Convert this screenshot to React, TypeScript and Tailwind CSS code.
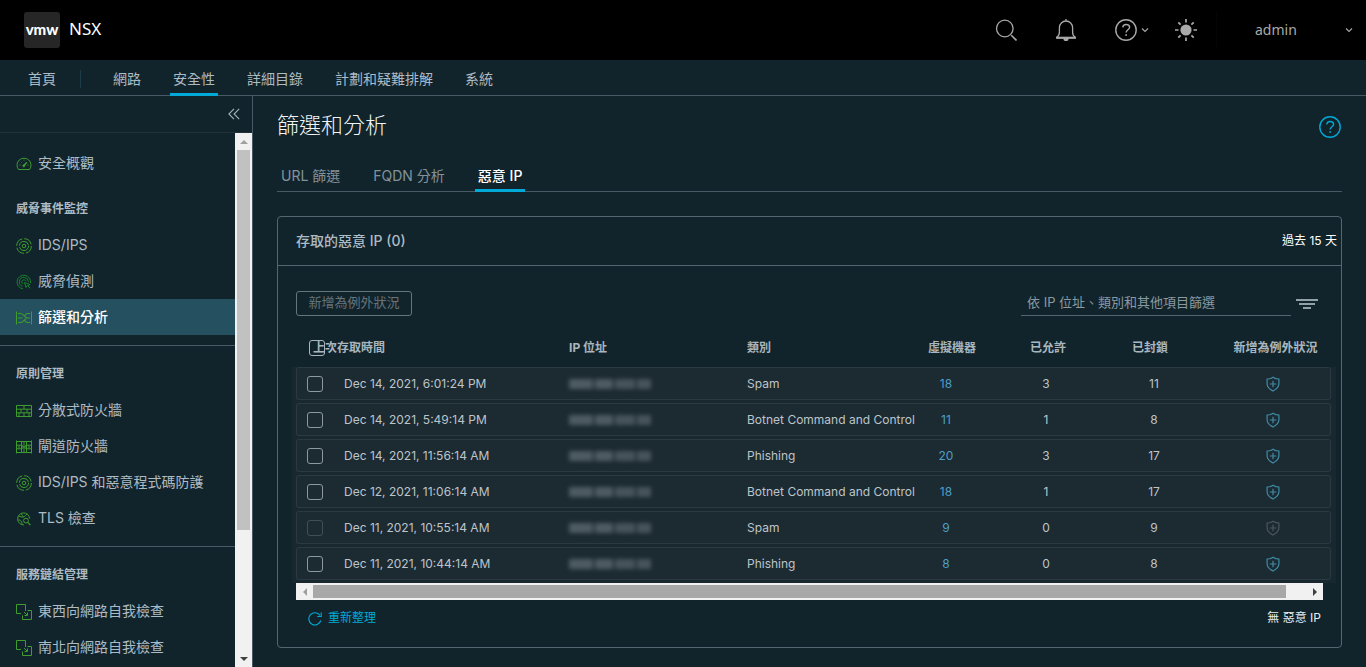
import type { ReactNode } from "react";

type IconName = "gauge" | "ids" | "detect" | "filter" | "wall" | "gateway" | "tls" | "intro";

type NavItem = { label: string; icon: IconName; active?: boolean };

const groups: { title?: string; divided?: boolean; items: NavItem[] }[] = [
  { items: [{ label: "安全概觀", icon: "gauge" }] },
  {
    title: "威脅事件監控",
    items: [
      { label: "IDS/IPS", icon: "ids" },
      { label: "威脅偵測", icon: "detect" },
      { label: "篩選和分析", icon: "filter", active: true },
    ],
  },
  {
    title: "原則管理",
    divided: true,
    items: [
      { label: "分散式防火牆", icon: "wall" },
      { label: "閘道防火牆", icon: "gateway" },
      { label: "IDS/IPS 和惡意程式碼防護", icon: "ids" },
      { label: "TLS 檢查", icon: "tls" },
    ],
  },
  {
    title: "服務鏈結管理",
    divided: true,
    items: [
      { label: "東西向網路自我檢查", icon: "intro" },
      { label: "南北向網路自我檢查", icon: "intro" },
    ],
  },
];

const rows = [
  { time: "Dec 14, 2021, 6:01:24 PM", category: "Spam", vms: 18, allowed: 3, blocked: 11, enabled: true },
  { time: "Dec 14, 2021, 5:49:14 PM", category: "Botnet Command and Control", vms: 11, allowed: 1, blocked: 8, enabled: true },
  { time: "Dec 14, 2021, 11:56:14 AM", category: "Phishing", vms: 20, allowed: 3, blocked: 17, enabled: true },
  { time: "Dec 12, 2021, 11:06:14 AM", category: "Botnet Command and Control", vms: 18, allowed: 1, blocked: 17, enabled: true },
  { time: "Dec 11, 2021, 10:55:14 AM", category: "Spam", vms: 9, allowed: 0, blocked: 9, enabled: false },
  { time: "Dec 11, 2021, 10:44:14 AM", category: "Phishing", vms: 8, allowed: 0, blocked: 8, enabled: true },
];

const iconShapes: Record<IconName, ReactNode> = {
  gauge: (
    <>
      <path d="M2.500 13.500A7 7 0 1 1 13.500 13.500Z" />
      <path d="M8 9.500 10.800 6.300" strokeWidth="1.500" />
      <circle cx="7.800" cy="9.800" r="1" fill="currentColor" />
      <path d="M8 3.600v1M3.500 9h1M11.500 9h1M4.800 5.800l.7.7" />
    </>
  ),
  ids: (
    <>
      <circle cx="8" cy="8" r="1.800" />
      <circle cx="8" cy="8" r="4.600" strokeDasharray="13 1.450" />
      <circle cx="8" cy="8" r="7.300" strokeDasharray="9.500 1.970" />
    </>
  ),
  detect: (
    <>
      <path d="M14.600 9.200A6.800 6.800 0 1 0 7 14.800" />
      <path d="M12.400 7.800A4.500 4.500 0 1 0 6.600 12.200" />
      <path d="M10 7.200a2.200 2.200 0 1 0-3.300 2.600" />
      <path d="m8.500 8.500 5.500 2-2.300 1.200 2.600 2.600M8.500 8.500l1.500 5 1.300-2.200" />
    </>
  ),
  filter: (
    <>
      <path d="M.5 1.500v13M15.500 1.500v13" />
      <path d="M2 3.500h2.500C8 3.500 8.500 8 11.500 8H14M2 12.500h2.500C8 12.500 8.500 8 11.500 8M2 8h4.500M8.800 5.500c.7-1.300 1.600-2 2.700-2H14M8.800 10.500c.7 1.300 1.600 2 2.700 2H14" strokeWidth="1.100" />
    </>
  ),
  wall: (
    <>
      <path d="M.5 2.500h15v11H.5zM.5 6.200h15M.5 9.800h15" />
      <path d="M5 6.200v3.600M11 6.200v3.600M8 2.500v3.700M3 9.800v3.700M13 9.800v3.700M8 9.800v3.700" />
    </>
  ),
  gateway: (
    <>
      <path d="M.5 1.500v13M15.500 1.500v13M.5 2.500h15M.5 13.500h15M5.500 2.500v11M10.500 2.500v11" />
      <path d="M.5 6.200h5M.5 9.800h5M10.500 6.200h5M10.500 9.800h5M3 6.200v3.600M13 6.200v3.600M8 3v10M5.500 8h5M6.500 6l-1 2 1 2M9.500 6l1 2-1 2" />
    </>
  ),
  tls: (
    <>
      <path d="M13.600 7.500A6 6 0 1 0 8 13.900" />
      <path d="M2.500 5.500c2-.5 3 1 5 .500s1.500-2.500 4-2.800M2 9c2-.5 2 1 3 1s1 2 .8 3.200M5.500 3c.5 1.500 1.500 2 2 3" />
      <circle cx="10" cy="9.600" r="2.400" />
      <path d="m11.800 11.400 2.700 2.700" strokeWidth="1.300" />
    </>
  ),
  intro: (
    <>
      <path d="M5 9.500H.5v-9h9V7" />
      <path d="M11.500 6.500h4v9h-9v-4" />
      <path d="m8 8 3 3M11.500 8.500v3h-3" />
    </>
  ),
};

function SideIcon({ name }: { name: IconName }) {
  return (
    <svg
      viewBox="0 0 16 16"
      className={`size-4 shrink-0 translate-y-px ${name === "detect" ? "text-[#15832a]" : "text-[#3f9c2f]"}`}
      fill="none"
      stroke="currentColor"
      strokeWidth="1"
      aria-hidden="true"
    >
      {iconShapes[name]}
    </svg>
  );
}

function HelpIcon() {
  return (
    <svg viewBox="0 0 22 22" className="size-[22px] shrink-0" fill="none" stroke="currentColor" strokeWidth="1.400" aria-hidden="true">
      <circle cx="11" cy="11" r="10.200" />
      <path d="M7.700 8.300c.4-2 1.800-2.800 3.500-2.800 2 0 3.400 1.100 3.400 2.800 0 2.400-3.500 2.500-3.500 5.200" />
      <circle cx="11.100" cy="16" r=".9" fill="currentColor" stroke="none" />
    </svg>
  );
}

function Chevron() {
  return (
    <svg viewBox="0 0 8 8" className="size-2 shrink-0" fill="none" stroke="currentColor" strokeWidth="1.100" aria-hidden="true">
      <path d="m1 2.500 3 3 3-3" />
    </svg>
  );
}

function ShieldPlus() {
  return (
    <svg viewBox="0 0 14 16" className="h-4 w-3.5" fill="none" stroke="currentColor" strokeWidth="1.200" aria-hidden="true">
      <path d="M7 1.200C5.300 2.400 3.300 3 1.100 3v4.800c0 3.300 2.700 5.600 5.900 7.200 3.200-1.600 5.900-3.900 5.900-7.200V3C10.700 3 8.700 2.400 7 1.200Z" />
      <path d="M7 4.700v6.600M3.700 8h6.600" />
    </svg>
  );
}

function Triangle({ className }: { className: string }) {
  return (
    <svg viewBox="0 0 8 4" className={className} fill="currentColor" aria-hidden="true">
      <path d="M0 4 4 0l4 4Z" />
    </svg>
  );
}

const checkbox = "block size-4 shrink-0 appearance-none rounded-[3px] border bg-transparent checked:bg-[#49afd9]";

function TopBar() {
  return (
    <header className="flex h-[60px] shrink-0 items-center bg-black text-[#a9a9a9]">
      <a href="#home" className="flex items-center gap-[9px] pl-6">
        <span className="flex size-9 items-center justify-center rounded-[3px] bg-[#262626] pb-0.5 font-['Lato'] text-[15px] leading-none font-black text-white">
          vmw
        </span>
        <span className="pb-0.5 font-['Noto_Sans'] text-[17px] leading-6 text-white">NSX</span>
      </a>
      <div className="ml-auto flex h-full items-center">
        <button type="button" aria-label="搜尋" className="flex h-full w-[60px] items-center justify-center">
          <svg viewBox="0 0 22 22" className="size-[22px]" fill="none" stroke="currentColor" strokeWidth="1.300" aria-hidden="true">
            <circle cx="9.800" cy="9.500" r="8.300" />
            <path d="m16.300 16.300 5.200 5.200" strokeWidth="1.600" />
          </svg>
        </button>
        <button type="button" aria-label="通知" className="flex h-full w-[60px] items-center justify-center">
          <svg viewBox="0 0 22 22" className="size-[22px]" fill="none" stroke="currentColor" strokeWidth="1.300" aria-hidden="true">
            <path d="M11 0v2M1.700 18.400c2-1.400 2.700-3 2.700-5.200V8.600a6.600 6.600 0 0 1 13.200 0v4.600c0 2.200.7 3.800 2.700 5.200v.7H1.700Z" />
            <path d="M1.500 18.600h19" strokeWidth="1.800" />
            <path d="M9 19.500a2 2 0 0 0 4 0Z" fill="currentColor" />
          </svg>
        </button>
        <button type="button" aria-label="說明" className="flex h-full w-[60px] items-center gap-1 pl-[19px]">
          <HelpIcon />
          <Chevron />
        </button>
        <button type="button" aria-label="主題" className="flex h-full w-[60px] items-center justify-center">
          <svg viewBox="0 0 22 22" className="size-[22px]" stroke="currentColor" strokeWidth="1.700" aria-hidden="true">
            <circle cx="11" cy="11" r="5.600" fill="currentColor" stroke="none" />
            <path d="M11 0v3.500M11 18.500V22M0 11h3.500M18.500 11H22M3.300 3.300l2.300 2.300M16.400 16.400l2.300 2.300M18.700 3.300l-2.300 2.300M5.600 16.400l-2.300 2.300" />
          </svg>
        </button>
        <button type="button" className="flex w-[150px] items-center justify-between border-l border-[#050505] py-2 pr-[13px] pl-[38px] font-['Noto_Sans'] text-sm">
          admin
          <Chevron />
        </button>
      </div>
    </header>
  );
}

function MainNav() {
  const link = "-mb-px flex items-center border-b-[3px] px-[3px] pt-1";
  return (
    <nav className="flex h-9 shrink-0 items-stretch border-b border-[#495865] pl-[25px] text-sm text-[#adbbc4]">
      <a href="#overview" className={`${link} border-transparent`}>首頁</a>
      <span className="mt-2.5 mr-[29px] ml-[21px] h-[18px] w-px bg-[#1f3d47]" />
      <div className="flex gap-[26px]">
        <a href="#network" className={`${link} border-transparent`}>網路</a>
        <a href="#security" aria-current="page" className={`${link} border-[#00a9d8]`}>安全性</a>
        <a href="#inventory" className={`${link} border-transparent`}>詳細目錄</a>
        <a href="#plan" className={`${link} border-transparent`}>計劃和疑難排解</a>
        <a href="#system" className={`${link} border-transparent`}>系統</a>
      </div>
    </nav>
  );
}

function Sidebar() {
  return (
    <aside className="flex w-[253px] shrink-0 flex-col border-r border-[#495865]">
      <div className="flex h-[37px] shrink-0 items-center justify-end border-b border-[#20313a] pr-3 text-[#a3b3bb]">
        <button type="button" aria-label="收合">
          <svg viewBox="0 0 12 12" className="size-3" fill="none" stroke="currentColor" strokeWidth="1.100" aria-hidden="true">
            <path d="M6 .8.900 6 6 11.200M11.200.8 6.100 6l5.100 5.200" />
          </svg>
        </button>
      </div>
      <div className="flex min-h-0 flex-1">
        <nav className="min-w-0 flex-1 overflow-hidden pt-3 text-sm text-[#adbbc4]">
          {groups.map((group, index) => (
            <section key={index} className={group.divided ? "mb-2.5 border-t border-[#495865] pt-2.5" : "mb-2.5"}>
              {group.title && <h2 className="flex h-9 items-center pl-4 text-xs font-bold">{group.title}</h2>}
              {group.items.map((item) => (
                <a
                  key={item.label}
                  href="#section"
                  className={`flex h-9 items-center gap-1.5 pl-4 ${item.active ? "bg-[#25505f] font-medium text-white" : ""}`}
                >
                  <SideIcon name={item.icon} />
                  {item.label}
                </a>
              ))}
            </section>
          ))}
        </nav>
        <div className="flex w-[17px] flex-col items-center bg-[#f1f1f1]" aria-hidden="true">
          <div className="flex h-[17px] items-center">
            <Triangle className="h-1 w-2 text-[#a0a0a0]" />
          </div>
          <div className="min-h-0 w-[13px] flex-1">
            <div className="h-[76%] bg-[#c1c1c1]" />
          </div>
          <div className="flex h-[17px] items-center">
            <Triangle className="h-1 w-2 rotate-180 text-[#404040]" />
          </div>
        </div>
      </div>
    </aside>
  );
}

function MaskedAddress() {
  return (
    <span className="flex h-2.5 w-[82px] gap-0.5 opacity-45 blur-[2px]">
      <span className="w-6 bg-[#8a979d]" />
      <span className="w-[18px] bg-[#8a979d]" />
      <span className="w-5 bg-[#7a878d]" />
      <span className="w-3.5 bg-[#7a878d]" />
    </span>
  );
}

function IpTable() {
  const head = "h-[37px] p-0 pb-0.5 text-xs font-bold";
  const cell = "h-[33px] border-y border-[#2a3942] bg-[#1c2a32] p-0";
  return (
    <table className="w-full table-fixed border-separate border-spacing-0 text-left">
      <colgroup>
        <col className="w-12" />
        <col className="w-[225px]" />
        <col className="w-[178px]" />
        <col />
        <col className="w-[60px]" />
        <col className="w-[136px]" />
        <col className="w-[72px]" />
        <col className="w-[143px]" />
      </colgroup>
      <thead className="text-[#a9b6be]">
        <tr>
          <th colSpan={2} className={head}>
            <label className="flex items-center pl-[13px]">
              <input type="checkbox" className={`${checkbox} border-[#a9b6be]`} />
              <span className="-ml-3">上次存取時間</span>
            </label>
          </th>
          <th className={head}>IP 位址</th>
          <th className={head}>類別</th>
          <th className={`${head} pl-1 text-center whitespace-nowrap`}>虛擬機器</th>
          <th className={`${head} text-center`}>已允許</th>
          <th className={`${head} pr-1 text-center`}>已封鎖</th>
          <th className={`${head} pl-8 text-center whitespace-nowrap`}>新增為例外狀況</th>
        </tr>
      </thead>
      {rows.map((row) => (
        <tbody key={row.time} className="text-xs text-[#bcc5ca]">
          <tr>
            <td className={`${cell} rounded-l-[3px] border-l`}>
              <input type="checkbox" aria-label={row.time} disabled={!row.enabled} className={`${checkbox} ml-2.5 border-[#8d999f] disabled:border-[#414e55]`} />
            </td>
            <td className={cell}>{row.time}</td>
            <td className={cell}>
              <MaskedAddress />
            </td>
            <td className={`${cell} whitespace-nowrap`}>{row.category}</td>
            <td className={`${cell} text-center`}>
              <a href="#vms" className="mr-2 text-[#4e9fc9]">{row.vms}</a>
            </td>
            <td className={`${cell} pr-1 text-center`}>{row.allowed}</td>
            <td className={`${cell} pl-1 text-center`}>{row.blocked}</td>
            <td className={`${cell} rounded-r-[3px] border-r pl-7`}>
              <button type="button" aria-label="新增為例外狀況" disabled={!row.enabled} className="mx-auto block text-[#3f8ba5] disabled:text-[#4b565c]">
                <ShieldPlus />
              </button>
            </td>
          </tr>
          <tr aria-hidden="true">
            <td colSpan={8} className="h-[3px] p-0" />
          </tr>
        </tbody>
      ))}
    </table>
  );
}

function Content() {
  const tab = "-mb-px flex items-center border-b-[3px] px-[3px] pt-1";
  return (
    <main className="min-w-0 flex-1 overflow-hidden px-6">
      <div className="flex h-[62px] items-center justify-between pr-px">
        <h1 className="pb-1 text-[22px] leading-8 font-light text-[#f1f5f7]">篩選和分析</h1>
        <button type="button" aria-label="說明" className="text-[#00a9d8]">
          <HelpIcon />
        </button>
      </div>
      <div role="tablist" className="flex h-[34px] gap-[27px] border-b border-[#495865] pl-px text-sm text-[#82929c]">
        <button type="button" role="tab" className={`${tab} border-transparent`}>URL 篩選</button>
        <button type="button" role="tab" className={`${tab} border-transparent`}>FQDN 分析</button>
        <button type="button" role="tab" aria-selected="true" className={`${tab} border-[#00a9d8] font-medium text-white`}>惡意 IP</button>
      </div>
      <section className="mt-6 rounded border border-[#566572]">
        <div className="flex h-[49px] items-center justify-between border-b border-[#566572] pr-1 pl-[18px]">
          <h2 className="text-sm font-medium text-[#adbbc4]">存取的惡意 IP (0)</h2>
          <span className="text-xs text-white">過去 15 天</span>
        </div>
        <div className="flex items-start justify-between pt-[25px] pr-[23px] pl-[18px]">
          <button type="button" disabled className="h-[25px] w-[116px] rounded-[3px] border border-[#66747b] pb-0.5 text-[13px] leading-none text-[#66747b]">
            新增為例外狀況
          </button>
          <div className="flex items-center gap-[5px]">
            <input
              type="text"
              aria-label="篩選"
              placeholder="依 IP 位址、類別和其他項目篩選"
              className="h-[25px] w-[270px] border-b border-[#566572] bg-transparent px-1.5 pb-0.5 text-[13px] outline-none placeholder:text-[#8b9aa2]"
            />
            <button type="button" aria-label="篩選選項" className="text-[#92a0a8]">
              <svg viewBox="0 0 22 12" className="h-3 w-[22px]" stroke="currentColor" strokeWidth="2" aria-hidden="true">
                <path d="M0 2h22M3 6h16M7 10h8" />
              </svg>
            </button>
          </div>
        </div>
        <div className="mt-3.5 mr-[5px] ml-3.5 bg-[linear-gradient(to_bottom,transparent_37px,#19272f_37px)] pr-[5px] pl-1">
          <IpTable />
        </div>
        <div className="mx-[18px] flex h-[17px] items-center bg-[#f1f1f1]" aria-hidden="true">
          <div className="flex w-[17px] justify-center">
            <Triangle className="h-1 w-2 -rotate-90 text-[#a0a0a0]" />
          </div>
          <div className="flex-1">
            <div className="h-[13px] w-[98%] bg-[#a8a8a8]" />
          </div>
          <div className="flex w-[17px] justify-center">
            <Triangle className="h-1 w-2 rotate-90 text-[#404040]" />
          </div>
        </div>
        <div className="flex h-[47px] items-start justify-between pt-2 pr-5 pl-[30px] text-xs leading-5">
          <button type="button" className="flex items-center gap-1.5 text-[#00a9d8]">
            <svg viewBox="0 0 14 14" className="size-3.5 translate-y-px" fill="none" stroke="currentColor" strokeWidth="1.100" aria-hidden="true">
              <path d="M12.800 8.500A6.100 6.100 0 1 1 12 3.500" />
              <path d="M13.200.5v4H9.300" />
            </svg>
            重新整理
          </button>
          <span className="text-[#e9eef1]">無 惡意 IP</span>
        </div>
      </section>
    </main>
  );
}

export default function App() {
  return (
    <div className="flex h-screen flex-col overflow-hidden bg-[#12242b] font-['Inter','Noto_Sans_CJK_TC',sans-serif]">
      <TopBar />
      <MainNav />
      <div className="flex min-h-0 flex-1">
        <Sidebar />
        <Content />
      </div>
    </div>
  );
}
